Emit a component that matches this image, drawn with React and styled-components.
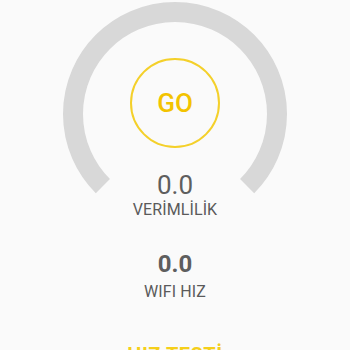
import React from "react";
import styled, { createGlobalStyle } from "styled-components";

const GlobalStyle = createGlobalStyle`
  html, body {
    margin: 0;
    padding: 0;
    background: #fafafa;
    font-family: Roboto, "Liberation Sans", Arial, sans-serif;
  }
`;

const SPage = styled.div`
  display: flex;
  flex-direction: column;
  align-items: center;
  width: 350px;
  height: 350px;
  overflow: hidden;
  background: #fafafa;
`;

const SGauge = styled.div`
  position: relative;
  display: flex;
  flex-direction: column;
  align-items: center;
  width: 100%;
  padding-top: 58px;
`;

const SArc = styled.svg`
  position: absolute;
  top: 0;
  left: 0;
`;

const SGoButton = styled.button`
  position: relative;
  display: flex;
  align-items: center;
  justify-content: center;
  width: 90px;
  height: 90px;
  box-sizing: border-box;
  border: 2px solid #f4d02a;
  border-radius: 50%;
  background: transparent;
  color: #f3c300;
  font-family: Roboto, "Liberation Sans", sans-serif;
  font-size: 26px;
  font-weight: 500;
  padding: 0;
  cursor: pointer;
`;

const SValue = styled.div`
  position: relative;
  margin-top: ${(p) => p.$gap}px;
  color: #5e5e5e;
  font-size: ${(p) => p.$size}px;
  line-height: ${(p) => p.$size + 4}px;
  font-weight: ${(p) => (p.$bold ? 700 : 400)};
`;

const SLabel = styled.div`
  position: relative;
  margin-top: ${(p) => p.$gap || 0}px;
  color: #5a5a5a;
  font-size: 16px;
  line-height: 20px;
  letter-spacing: 0.1px;
`;

const STestButton = styled.div`
  margin-top: 41px;
  color: #f5cf1a;
  font-size: 20px;
  line-height: 24px;
  font-weight: 700;
  letter-spacing: 0.5px;
`;

const Gauge = () => {
  const cx = 175;
  const cy = 114;
  const r = 102;
  const d = r * Math.SQRT1_2;
  return (
    <SArc width="350" height="200" viewBox="0 0 350 200">
      <path
        d={`M ${cx - d} ${cy + d} A ${r} ${r} 0 1 1 ${cx + d} ${cy + d}`}
        fill="none"
        stroke="#d8d8d8"
        strokeWidth="20"
      />
    </SArc>
  );
};

const App = () => {
  return (
    <SPage>
      <GlobalStyle />
      <SGauge>
        <Gauge />
        <SGoButton>GO</SGoButton>
        <SValue $size={26} $gap={22}>0.0</SValue>
        <SLabel>VERİMLİLİK</SLabel>
      </SGauge>
      <SValue $size={24} $gap={30} $bold>
        0.0
      </SValue>
      <SLabel $gap={4}>WIFI HIZ</SLabel>
      <STestButton>HIZ TESTİ</STestButton>
    </SPage>
  );
};

export default App;
